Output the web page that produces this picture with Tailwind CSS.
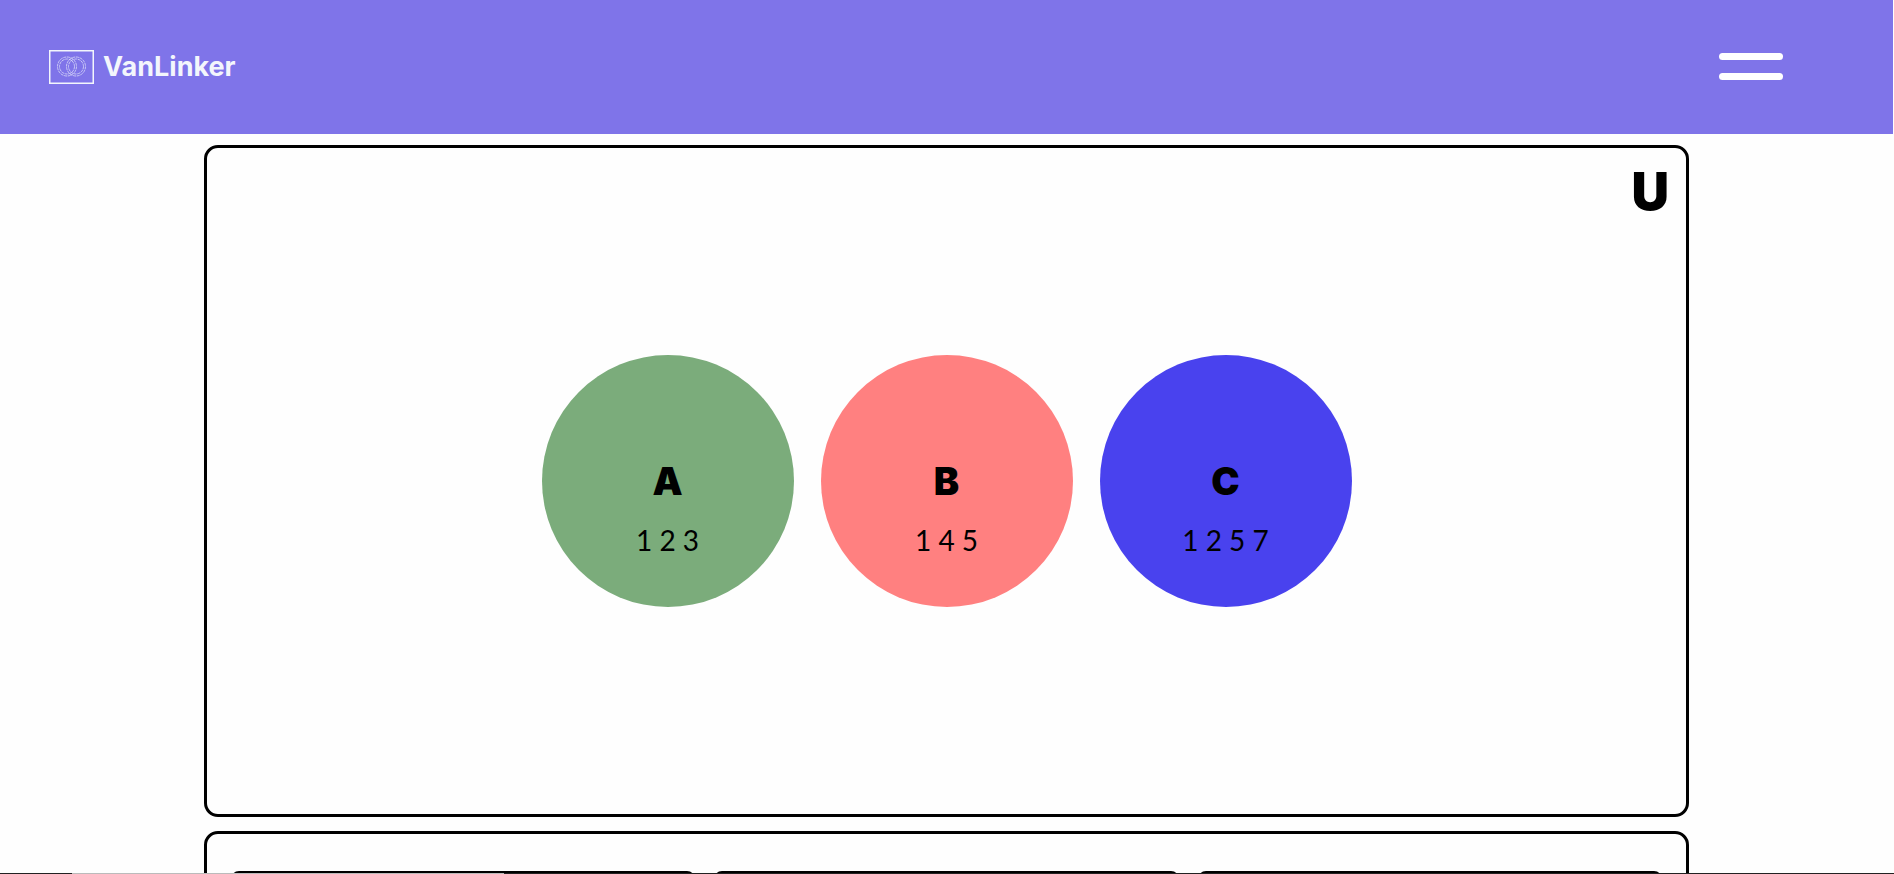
<!DOCTYPE html>
<html lang="en">
<head>
<meta charset="utf-8">
<title>VanLinker</title>
<script src="https://cdn.jsdelivr.net/npm/@tailwindcss/browser@4"></script>
</head>
<body class="h-screen overflow-hidden bg-[#fefefe] font-['Lato','Inter',sans-serif] text-black">
<div class="mr-px h-full overflow-hidden">
  <header class="flex h-[134px] items-center justify-between bg-[#7f74e9] pl-[49px] pr-[110px]">
    <a href="#" class="flex items-center gap-[9px] text-[#f3f6fc]">
      <svg class="h-[34px] w-[45px]" viewBox="0 0 45 34" fill="none" stroke="currentColor" aria-hidden="true">
        <rect x=".75" y=".75" width="43.5" height="32.5" stroke-width="1.5"/>
        <g stroke-width=".8" stroke-dasharray="3 .7" opacity=".8">
          <circle cx="18" cy="16.500" r="9.500"/><circle cx="18" cy="16.500" r="7.500"/>
          <circle cx="27" cy="16.500" r="9.500"/><circle cx="27" cy="16.500" r="7.500"/>
        </g>
      </svg>
      <span class="font-['Inter',sans-serif] text-[27px] font-bold leading-8">VanLinker</span>
    </a>
    <button type="button" aria-label="Open menu" class="flex w-16 flex-col gap-[13px] pb-0.5">
      <span class="h-[7px] w-full rounded-full bg-white"></span>
      <span class="h-[7px] w-full rounded-full bg-white"></span>
    </button>
  </header>
  <main class="px-[204px] pt-[11px]">
    <section class="relative flex h-[672px] items-center justify-center gap-[27px] rounded-[14px] border-3 border-black">
      <h1 class="absolute right-[17px] top-3 font-['Inter',sans-serif] text-[52px] font-black leading-[64px]">U</h1>
      <div class="size-[252px] rounded-full bg-[#7bac7b] pt-24 text-center">
        <h2 class="font-['Inter',sans-serif] text-[38px] font-black leading-[60px]">A</h2>
        <p class="text-[28px] leading-[58px]">1 2 3</p>
      </div>
      <div class="size-[252px] rounded-full bg-[#ff8080] pt-24 text-center">
        <h2 class="font-['Inter',sans-serif] text-[38px] font-black leading-[60px]">B</h2>
        <p class="text-[28px] leading-[58px]">1 4 5</p>
      </div>
      <div class="size-[252px] rounded-full bg-[#4942ee] pt-24 text-center">
        <h2 class="font-['Inter',sans-serif] text-[38px] font-black leading-[60px]">C</h2>
        <p class="text-[28px] leading-[58px]">1 2 5 7</p>
      </div>
    </section>
    <section class="mt-[14px] grid h-[300px] grid-cols-3 gap-[19px] rounded-[14px] border-3 border-black px-6 pt-[37px]">
      <div class="h-40 rounded-lg border-3 border-black"></div>
      <div class="h-40 rounded-lg border-3 border-black"></div>
      <div class="h-40 rounded-lg border-3 border-black"></div>
    </section>
  </main>
</div>
<div class="fixed inset-x-0 bottom-0 flex h-px bg-[#222]"><span class="ml-[72px] w-[432px] bg-[#bbb]"></span></div>
</body>
</html>
